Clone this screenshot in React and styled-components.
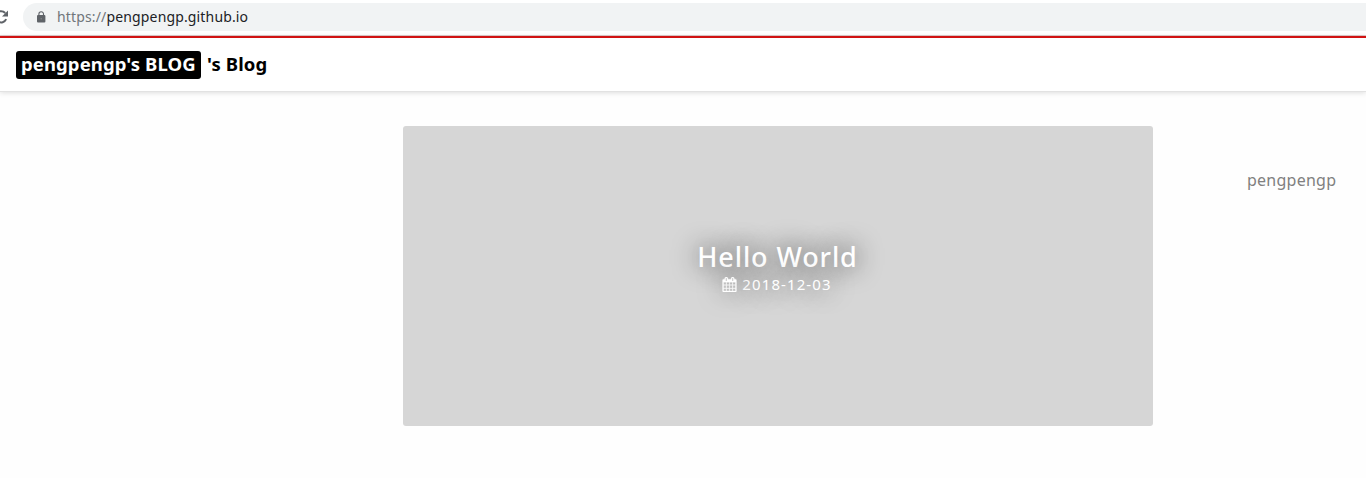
import React from "react";
import styled, { createGlobalStyle } from "styled-components";

const GlobalStyle = createGlobalStyle`
  *, *::before, *::after { box-sizing: border-box; }
  body {
    margin: 0;
    background: #fefefe;
    font-family: "Noto Sans", "Open Sans", sans-serif;
    overflow: hidden;
  }
`;

const Page = styled.div`
  display: flex;
  flex-direction: column;
  height: 478px;
`;

const BrowserBar = styled.div`
  display: flex;
  align-items: flex-start;
  height: 36px;
  padding-top: 3px;
  border-bottom: 1px solid #dfc9c9;
  background: #fff;
`;

const ReloadIcon = styled.svg`
  flex: none;
  width: 16px;
  height: 16px;
  margin: 6px 14px 0 -7px;
`;

const AddressField = styled.div`
  flex: 1;
  display: flex;
  align-items: center;
  height: 28px;
  padding-left: 13px;
  border-radius: 14px 0 0 14px;
  background: #f1f3f4;
`;

const LockIcon = styled.svg`
  width: 10px;
  height: 12px;
  margin-right: 11px;
`;

const Url = styled.span`
  font-size: 14px;
  line-height: 20px;
  letter-spacing: 0.15px;
  color: #202124;
  white-space: nowrap;
`;

const Scheme = styled.span`
  color: #70757a;
`;

const Header = styled.header`
  display: flex;
  align-items: center;
  height: 56px;
  padding: 0 16px;
  border-top: 2px solid #d01212;
  border-bottom: 1px solid #e2e2e2;
  background: #fff;
  box-shadow: 0 1px 5px rgba(0, 0, 0, 0.13);
`;

const SiteTitle = styled.h1`
  display: flex;
  align-items: center;
  margin: 0;
  font-size: 18.5px;
  font-weight: 700;
  letter-spacing: 0.1px;
  line-height: 26px;
  color: #000;
  white-space: nowrap;
`;

const TitleBadge = styled.span`
  width: 185px;
  height: 28px;
  margin-right: 6px;
  padding-left: 5px;
  border-radius: 3px;
  background: #000;
  color: #fff;
`;

const TitleSuffix = styled.span`
  height: 28px;
`;

const Content = styled.main`
  display: flex;
  align-items: flex-start;
  padding: 34px 0 0 403px;
`;

const PostCard = styled.article`
  display: flex;
  flex-direction: column;
  align-items: center;
  width: 750px;
  height: 300px;
  padding-top: 112px;
  border-radius: 3px;
  background: #d6d6d6;
  color: #fff;
  text-shadow: 0 0 26px rgba(0, 0, 0, 0.9);
`;

const PostTitle = styled.h2`
  margin: 0 1px 0 0;
  font-size: 27px;
  font-weight: 500;
  line-height: 37px;
  letter-spacing: 0.9px;
  white-space: nowrap;
`;

const PostDate = styled.div`
  display: flex;
  align-items: center;
  gap: 5px;
  margin-left: -2px;
  font-size: 15px;
  font-weight: 400;
  line-height: 18px;
  letter-spacing: 1.1px;
  white-space: nowrap;
`;

const CalendarIcon = styled.svg`
  width: 15px;
  height: 15px;
  fill: #fff;
  stroke: #fff;
  stroke-width: 30;
  filter: drop-shadow(0 0 12px rgba(0, 0, 0, 0.6));
`;

const Author = styled.aside`
  margin: 43px 0 0 94px;
  font-size: 16px;
  line-height: 22px;
  letter-spacing: 0.25px;
  color: #808080;
`;

export default function App() {
  return (
    <Page>
      <GlobalStyle />
      <BrowserBar>
        <ReloadIcon viewBox="0 0 16 16" fill="none" stroke="#5f6368" strokeWidth="2">
          <path d="M13.2 10.2A5.6 5.6 0 1 1 12.2 4" />
          <path d="M15 1.5v6H9z" fill="#5f6368" stroke="none" />
        </ReloadIcon>
        <AddressField>
          <LockIcon viewBox="0 0 10 12">
            <rect x="1" y="4" width="8.4" height="7.6" rx="1" fill="#5f6368" />
            <path d="M2.9 4.5V3a2.3 2.3 0 0 1 4.6 0v1.5" fill="none" stroke="#5f6368" strokeWidth="1.1" />
            <circle cx="5.2" cy="7.8" r="0.8" fill="#84888b" />
          </LockIcon>
          <Url><Scheme>https://</Scheme>pengpengp.github.io</Url>
        </AddressField>
      </BrowserBar>
      <Header>
        <SiteTitle>
          <TitleBadge>pengpengp's BLOG</TitleBadge>
          <TitleSuffix>'s Blog</TitleSuffix>
        </SiteTitle>
      </Header>
      <Content>
        <PostCard>
          <PostTitle>Hello World</PostTitle>
          <PostDate>
            <CalendarIcon viewBox="0 0 1664 1792">
              <path d="M128 1664h288v-288h-288v288zm352 0h320v-288h-320v288zm-352-352h288v-320h-288v320zm352 0h320v-320h-320v320zm-352-384h288v-288h-288v288zm736 736h320v-288h-320v288zm-384-736h320v-288h-320v288zm768 736h288v-288h-288v288zm-384-352h320v-320h-320v320zm-352-864v-288q0-13-9.5-22.5t-22.5-9.5h-64q-13 0-22.5 9.5t-9.5 22.5v288q0 13 9.5 22.5t22.5 9.5h64q13 0 22.5-9.5t9.5-22.5zm736 864h288v-320h-288v320zm-384-384h320v-288h-320v288zm384 0h288v-288h-288v288zm32-480v-288q0-13-9.5-22.5t-22.5-9.5h-64q-13 0-22.5 9.5t-9.5 22.5v288q0 13 9.5 22.5t22.5 9.5h64q13 0 22.5-9.5t9.5-22.5zm384-64v1280q0 52-38 90t-90 38h-1408q-52 0-90-38t-38-90v-1280q0-52 38-90t90-38h128v-96q0-66 47-113t113-47h64q66 0 113 47t47 113v96h384v-96q0-66 47-113t113-47h64q66 0 113 47t47 113v96h128q52 0 90 38t38 90z" />
            </CalendarIcon>
            <span>2018-12-03</span>
          </PostDate>
        </PostCard>
        <Author>pengpengp</Author>
      </Content>
    </Page>
  );
}
